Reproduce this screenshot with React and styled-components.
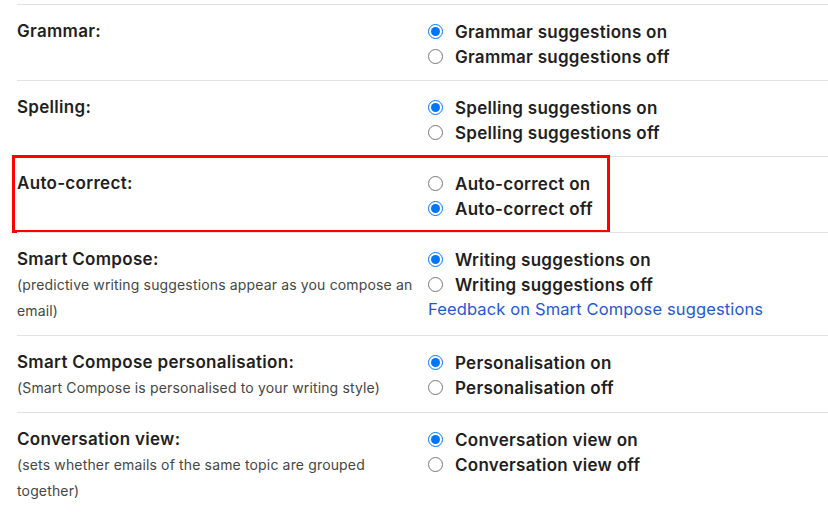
import React from "react";
import styled, { createGlobalStyle } from "styled-components";

const GlobalStyle = createGlobalStyle`
  body {
    margin: 0;
    background: #fff;
    font-family: "Inter", "Roboto", "Liberation Sans", sans-serif;
    color: #1f1f1f;
  }
`;

const settings = [
  {
    id: "grammar",
    label: "Grammar:",
    options: ["Grammar suggestions on", "Grammar suggestions off"],
    checked: 0,
  },
  {
    id: "spelling",
    label: "Spelling:",
    options: ["Spelling suggestions on", "Spelling suggestions off"],
    checked: 0,
  },
  {
    id: "autocorrect",
    label: "Auto-correct:",
    options: ["Auto-correct on", "Auto-correct off"],
    checked: 1,
    highlighted: true,
  },
  {
    id: "smartcompose",
    label: "Smart Compose:",
    note: "(predictive writing suggestions appear as you compose an email)",
    options: ["Writing suggestions on", "Writing suggestions off"],
    checked: 0,
    link: "Feedback on Smart Compose suggestions",
  },
  {
    id: "personalisation",
    label: "Smart Compose personalisation:",
    note: "(Smart Compose is personalised to your writing style)",
    options: ["Personalisation on", "Personalisation off"],
    checked: 0,
  },
  {
    id: "conversation",
    label: "Conversation view:",
    note: "(sets whether emails of the same topic are grouped together)",
    options: ["Conversation view on", "Conversation view off"],
    checked: 0,
  },
];

const SettingsPanel = () => (
  <>
    <GlobalStyle />
    <Wrapper>
      {settings.map((s) => (
        <Row key={s.id} $highlighted={s.highlighted}>
          <LabelColumn>
            <Label>{s.label}</Label>
            {s.note && <Note>{s.note}</Note>}
          </LabelColumn>
          <OptionColumn>
            {s.options.map((opt, i) => (
              <Option key={opt}>
                <input
                  type="radio"
                  name={s.id}
                  defaultChecked={i === s.checked}
                />
                <span>{opt}</span>
              </Option>
            ))}
            {s.link && <FeedbackLink href="#">{s.link}</FeedbackLink>}
          </OptionColumn>
        </Row>
      ))}
    </Wrapper>
  </>
);

const Wrapper = styled.div`
  padding: 4px 0 0 17px;
  width: 811px;
`;

const Row = styled.div`
  position: relative;
  display: grid;
  grid-template-columns: 411px 1fr;
  border-top: 1px solid #e3e3e3;
  padding: 14px 0 11px;
  &::after {
    content: "";
    display: ${({ $highlighted }) => ($highlighted ? "block" : "none")};
    position: absolute;
    left: -5px;
    top: -2px;
    width: 592px;
    height: 72px;
    border: 3px solid #ff0000;
    pointer-events: none;
  }
`;

const LabelColumn = styled.div`
  padding-right: 10px;
`;

const Label = styled.div`
  font-size: 17px;
  font-weight: 600;
  line-height: 25px;
  letter-spacing: 0.3px;
  color: #1f1f1f;
`;

const Note = styled.div`
  font-size: 14px;
  line-height: 26px;
  letter-spacing: 0.15px;
  color: #444746;
`;

const OptionColumn = styled.div`
  display: flex;
  flex-direction: column;
`;

const Option = styled.label`
  display: flex;
  align-items: center;
  gap: 12px;
  height: 25px;
  font-size: 17px;
  font-weight: 600;
  letter-spacing: 0.27px;
  color: #1f1f1f;
  input {
    width: 15px;
    height: 15px;
    margin: 0;
    accent-color: #0075ff;
  }
`;

const FeedbackLink = styled.a`
  font-size: 16.5px;
  line-height: 25px;
  letter-spacing: 0.13px;
  color: #2559d2;
  text-decoration: none;
`;

export default SettingsPanel;
